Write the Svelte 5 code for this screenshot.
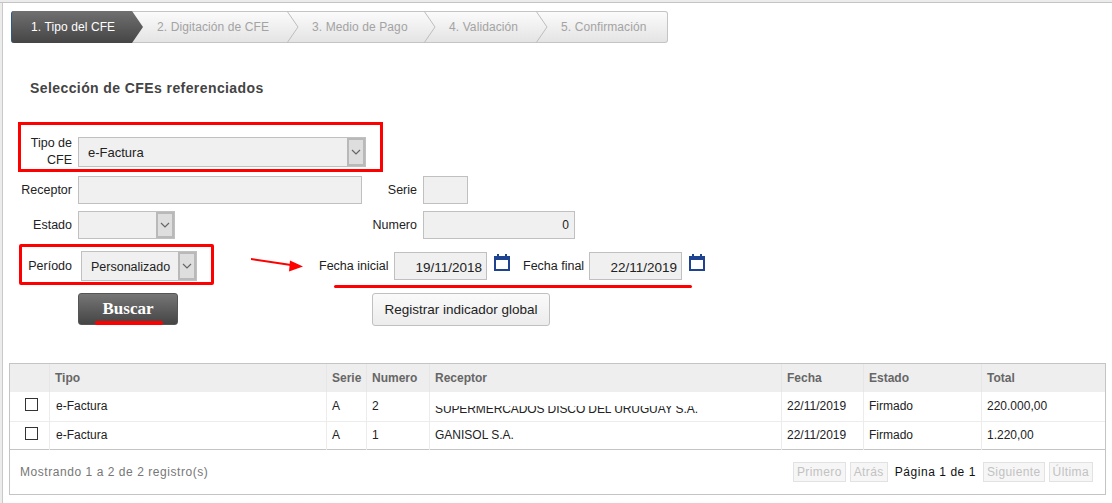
<script>
  const steps = ['1. Tipo del CFE', '2. Digitación de CFE', '3. Medio de Pago', '4. Validación', '5. Confirmación'];
  const stepWidths = [121, 155, 137, 112, 132];
  const columns = ['', 'Tipo', 'Serie', 'Numero', 'Receptor', 'Fecha', 'Estado', 'Total'];
  const rows = [
    { tipo: 'e-Factura', serie: 'A', numero: '2', receptor: 'SUPERMERCADOS DISCO DEL URUGUAY S.A.', fecha: '22/11/2019', estado: 'Firmado', total: '220.000,00', cut: true },
    { tipo: 'e-Factura', serie: 'A', numero: '1', receptor: 'GANISOL S.A.', fecha: '22/11/2019', estado: 'Firmado', total: '1.220,00', cut: false }
  ];
</script>

{#snippet chevron()}
  <svg class="chev" width="12" height="8" viewBox="0 0 12 8"><path d="M2 2l4 4 4-4" fill="none" stroke="#666" stroke-width="1.2" /></svg>
{/snippet}

{#snippet calendar()}
  <svg class="cal" width="16" height="17" viewBox="0 0 16 17">
    <path d="M0 2h3V0h2v2h6V0h2v2h3v15H0z" fill="#1f4391" />
    <rect x="2" y="6" width="12" height="9" fill="#fff" />
  </svg>
{/snippet}

<div class="page">
  <nav class="wizard">
    {#each steps as step, i}
      <div class="step" class:active={i === 0} style="width: {stepWidths[i]}px">
        <span>{step}</span>
        {#if i < steps.length - 1}
          <svg class="arrow" width="16" height="32" viewBox="0 0 16 32">
            {#if i === 0}
              <path d="M0 0l11 16L0 32z" fill="url(#dark)" />
            {:else}
              <path d="M0 0l11 16L0 32" fill="none" stroke="#bdbdbd" />
            {/if}
          </svg>
        {/if}
      </div>
    {/each}
    <svg width="0" height="0" class="defs"><defs><linearGradient id="dark" x1="0" y1="0" x2="0" y2="1"><stop offset="0" stop-color="#707070" /><stop offset="1" stop-color="#454545" /></linearGradient></defs></svg>
  </nav>

  <h2>Selección de CFEs referenciados</h2>

  <form class="form" onsubmit={(e) => e.preventDefault()}>
    <div class="row r1">
      <label class="lbl two">Tipo de<br />CFE</label>
      <div class="select wide"><span>e-Factura</span><i>{@render chevron()}</i></div>
    </div>
    <div class="row r2">
      <label class="lbl">Receptor</label>
      <div class="input receptor"></div>
      <label class="lbl serie-l">Serie</label>
      <div class="input serie"></div>
    </div>
    <div class="row r3">
      <label class="lbl">Estado</label>
      <div class="select estado"><i>{@render chevron()}</i></div>
      <label class="lbl numero-l">Numero</label>
      <div class="input numero">0</div>
    </div>
    <div class="row r4">
      <label class="lbl periodo-l">Período</label>
      <div class="select periodo"><span>Personalizado</span><i>{@render chevron()}</i></div>
      <label class="lbl fi-l">Fecha inicial</label>
      <div class="input date">19/11/2018</div>
      {@render calendar()}
      <label class="lbl ff-l">Fecha final</label>
      <div class="input date">22/11/2019</div>
      {@render calendar()}
    </div>
    <div class="row r5">
      <button class="buscar" type="button">Buscar</button>
      <button class="registrar" type="button">Registrar indicador global</button>
    </div>
  </form>

  <section class="grid">
    <table>
      <thead>
        <tr>
          {#each columns as col}<th>{col}</th>{/each}
        </tr>
      </thead>
      <tbody>
        {#each rows as row}
          <tr>
            <td class="check"><span class="box"></span></td>
            <td class="tipo">{row.tipo}</td>
            <td>{row.serie}</td>
            <td>{row.numero}</td>
            <td><span class:cut={row.cut}>{row.receptor}</span></td>
            <td>{row.fecha}</td>
            <td>{row.estado}</td>
            <td>{row.total}</td>
          </tr>
        {/each}
      </tbody>
    </table>
    <footer>
      <span class="info">Mostrando 1 a 2 de 2 registro(s)</span>
      <div class="pager">
        <span class="pg">Primero</span>
        <span class="pg">Atrás</span>
        <span class="cur">Página 1 de 1</span>
        <span class="pg">Siguiente</span>
        <span class="pg">Última</span>
      </div>
    </footer>
  </section>

  <!-- hand drawn red marks on top of the screenshot -->
  <div class="mark m1"></div>
  <div class="mark m2"></div>
  <div class="line l1"></div>
  <div class="line l2"></div>
  <svg class="red-arrow" width="54" height="16" viewBox="0 0 54 16">
    <path d="M0 2l40 6" stroke="#f00" stroke-width="2" />
    <path d="M52 9.500L39 3.500l-1 11z" fill="#f00" />
  </svg>
</div>

<style>
  :global(body) {
    background: #fff;
    font-family: "Liberation Sans", Arial, sans-serif;
    font-size: 12px;
    color: #222;
  }
  .page {
    position: relative;
    box-sizing: border-box;
    width: 1112px;
    height: 503px;
    overflow: hidden;
    padding: 9px 6px 0 7px;
    margin: 0;
    border-top: 2px solid #ececec;
    box-shadow: inset 0 1px 0 #c4c4c4, inset 2px 0 0 #ececec, inset 3px 0 0 #c9c9c9;
  }
  .wizard {
    display: flex;
    width: 657px;
    height: 32px;
    margin-left: 4px;
    box-sizing: border-box;
    border: 1px solid #c4c4c4;
    border-left: 0;
    border-radius: 3px;
    background: linear-gradient(#fbfbfb, #e4e4e4);
  }
  .defs { position: absolute; }
  .step {
    position: relative;
    flex: none;
    box-sizing: border-box;
    height: 30px;
    line-height: 30px;
    font-size: 12px;
    letter-spacing: 0.1px;
    color: #a3a3a3;
    padding-left: 25px;
    white-space: nowrap;
  }
  .step.active {
    height: 32px;
    margin-top: -1px;
    line-height: 32px;
    padding-left: 19px;
    color: #fff;
    background: linear-gradient(#707070, #454545);
    border-left: 1px solid #2e5a85;
    border-radius: 3px 0 0 3px;
  }
  .arrow {
    position: absolute;
    left: 100%;
    top: -1px;
    z-index: 1;
  }
  .active .arrow { top: 0; }
  h2 {
    margin: 37px 0 0 23px;
    font-size: 14px;
    line-height: 16px;
    font-weight: bold;
    color: #444;
    letter-spacing: 0.41px;
  }
  .form {
    margin-top: 39px;
    height: 189px;
    display: flex;
    flex-direction: column;
  }
  .row { display: flex; align-items: center; }
  .lbl {
    flex: none;
    box-sizing: border-box;
    width: 65px;
    text-align: right;
    color: #222;
    font-size: 12.5px;
    line-height: 18px;
    white-space: nowrap;
  }
  .lbl.two { line-height: 17px; }
  .r1 { height: 30px; margin-top: 2px; }
  .r2 { height: 28px; margin-top: 9px; }
  .r3 { height: 28px; margin-top: 7px; }
  .r4 { height: 30px; margin-top: 12px; }
  .r5 { margin-top: 12px; align-items: flex-start; }
  .input, .select {
    box-sizing: border-box;
    flex: none;
    margin-left: 6px;
    height: 28px;
    line-height: 26px;
    border: 1px solid #c0c0c0;
    background: #f0f0f0;
    color: #222;
  }
  .select {
    display: flex;
    justify-content: space-between;
    font-size: 13px;
  }
  .select span { padding-left: 9px; }
  .select i {
    flex: none;
    margin-left: auto;
    width: 18px;
    display: flex;
    align-items: center;
    justify-content: center;
    background: #dedede;
    box-shadow: inset 0 0 0 2px #b9b9b9;
  }
  .wide { width: 288px; height: 30px; line-height: 30px; }
  .receptor { width: 284px; }
  .serie-l { width: 55px; }
  .serie { width: 45px; }
  .estado { width: 97px; }
  .numero-l { width: 242px; }
  .numero {
    width: 152px;
    text-align: right;
    padding-right: 5px;
  }
  .periodo-l { width: 58px; margin-left: 7px; }
  .periodo {
    width: 116px;
    height: 30px;
    margin-left: 9px;
    line-height: 30px;
    font-size: 12.5px;
  }
  .fi-l { width: 69px; margin-left: 122px; text-align: left; }
  .date {
    width: 93px;
    margin-left: 6px;
    padding-right: 4px;
    text-align: right;
    font-size: 13.5px;
    line-height: 29px;
  }
  .cal { flex: none; margin: -7px 0 0 7px; }
  .ff-l { width: 60px; margin-left: 13px; text-align: left; }
  .buscar {
    flex: none;
    width: 100px;
    height: 32px;
    margin-left: 71px;
    padding: 0;
    border: 1px solid #555;
    border-radius: 3px;
    background: linear-gradient(#767676, #454545);
    color: #fff;
    font-family: "Liberation Serif", serif;
    font-weight: bold;
    font-size: 17px;
  }
  .registrar {
    flex: none;
    width: 178px;
    height: 33px;
    margin-left: 194px;
    padding: 0;
    border: 1px solid #c0c0c0;
    border-radius: 3px;
    background: linear-gradient(#fafafa, #ececec);
    color: #222;
    font-family: "Liberation Sans", Arial, sans-serif;
    font-size: 13.5px;
  }
  .grid {
    box-sizing: border-box;
    width: 1097px;
    height: 132px;
    margin-top: 39px;
    margin-left: 2px;
    border: 1px solid #c4c4c4;
  }
  table {
    width: 100%;
    table-layout: fixed;
    border-collapse: collapse;
  }
  thead tr { height: 28px; background: #eeeeee; }
  th {
    padding: 0 0 0 5px;
    text-align: left;
    font-size: 12px;
    font-weight: bold;
    color: #666;
    border-right: 1px solid #e6e6e6;
  }
  th:last-child, td:last-child { border-right: 0; }
  th:nth-child(1) { width: 34px; }
  th:nth-child(2) { width: 271px; }
  th:nth-child(3) { width: 34px; }
  th:nth-child(4) { width: 57px; }
  th:nth-child(5) { width: 346px; }
  th:nth-child(6) { width: 76px; }
  th:nth-child(7) { width: 112px; }
  tbody tr { height: 29px; border-bottom: 1px solid #ececec; }
  tbody tr:last-child { height: 28px; border-bottom: 1px solid #c4c4c4; }
  td {
    padding: 0 0 0 5px;
    font-size: 12px;
    color: #222;
    border-right: 1px solid #ececec;
    white-space: nowrap;
    overflow: hidden;
  }
  td.tipo { padding-left: 6px; }
  td.check { padding: 0 0 3px 15px; line-height: 0; }
  .box {
    display: inline-block;
    box-sizing: border-box;
    width: 13px;
    height: 13px;
    border: 1px solid #333;
    background: #fff;
  }
  .cut {
    display: inline-block;
    height: 7px;
    line-height: 7px;
    overflow: hidden;
    vertical-align: -3px;
    color: #222;
    letter-spacing: -0.1px;
  }
  footer {
    display: flex;
    justify-content: space-between;
    align-items: center;
    height: 44px;
    padding: 0 12px 0 10px;
    color: #777;
    font-size: 12px;
    letter-spacing: 0.55px;
  }
  .pager { display: flex; align-items: center; gap: 4px; }
  .pg {
    box-sizing: border-box;
    height: 20px;
    line-height: 18px;
    padding: 0 3px;
    border: 1px solid #e2e2e2;
    background: #f6f6f6;
    color: #c2c2c2;
    letter-spacing: 0.4px;
  }
  .cur { color: #111; padding: 0 3px; }
  .mark {
    position: absolute;
    box-sizing: border-box;
    border: 3px solid #f00;
  }
  .m1 { left: 18px; top: 120px; width: 365px; height: 50px; }
  .m2 { left: 19px; top: 242px; width: 195px; height: 41px; border-radius: 2px; }
  .line {
    position: absolute;
    height: 3px;
    background: #f00;
    border-radius: 2px;
  }
  .l1 { left: 95px; top: 319px; width: 68px; height: 4px; }
  .l2 { left: 334px; top: 283px; width: 358px; }
  .red-arrow { position: absolute; left: 251px; top: 255px; }
</style>
